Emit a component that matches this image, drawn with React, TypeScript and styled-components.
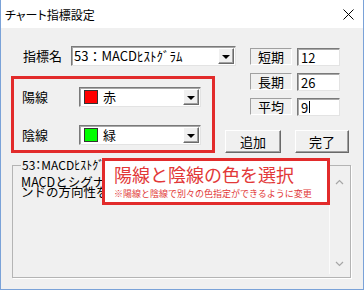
import React from "react";
import styled, { createGlobalStyle, css } from "styled-components";

const Global = createGlobalStyle`
  html, body { margin: 0; padding: 0; background: #ffffff; }
  * { box-sizing: border-box; }
`;

const RED = "#e22b2b";

const Win = styled.div`
  position: relative;
  width: 364px;
  height: 290px;
  border: 1px solid #7aa2d8;
  border-top: none;
  display: flex;
  flex-direction: column;
  font-family: "Noto Sans CJK JP", "Noto Sans", sans-serif;
  color: #000;
`;

const TitleBar = styled.div`
  height: 28px;
  flex: none;
  background: #fff;
  display: flex;
  align-items: center;
  justify-content: space-between;
  padding: 0 9px 0 4px;
  font-size: 12px;
  font-feature-settings: "palt";
`;

const Body = styled.div`
  flex: 1;
  background: #f0f0f0;
  padding: 18px 0 0 10px;
  font-size: 13px;
`;

const Upper = styled.div`
  display: flex;
  align-items: flex-start;
`;

const LeftCol = styled.div`
  width: 204px;
  flex: none;
`;

const Row = styled.div<{ $label: number; $pad: number }>`
  display: flex;
  align-items: center;
  height: 20px;
  & > span:first-child {
    width: ${(p) => p.$label}px;
    padding-left: ${(p) => p.$pad}px;
    flex: none;
    line-height: 20px;
  }
`;

const sunken = css`
  border: 1px solid;
  border-color: #7a7a7a #e3e3e3 #e3e3e3 #7a7a7a;
  box-shadow: inset 1px 1px 0 #a8a8a8;
`;

const Combo = styled.div<{ $w: number }>`
  ${sunken};
  width: ${(p) => p.$w}px;
  height: 20px;
  flex: none;
  background: #fff;
  display: flex;
  align-items: center;
  padding: 0 1px 0 2px;
  font-size: 13px;
  white-space: nowrap;
`;

const ComboText = styled.span`
  flex: 1;
  display: flex;
  align-items: center;
  gap: 5px;
  line-height: 18px;
`;

const DropBtn = styled.span`
  flex: none;
  width: 16px;
  height: 16px;
  background: #f0f0f0;
  border: 1px solid;
  border-color: #fff #6a6a6a #6a6a6a #fff;
  box-shadow: inset -1px -1px 0 #a0a0a0;
  display: flex;
  align-items: center;
  justify-content: center;
  &::after {
    content: "";
    border-left: 4px solid transparent;
    border-right: 4px solid transparent;
    border-top: 4px solid #000;
    margin-top: 1px;
  }
`;

const Swatch = styled.span<{ $c: string }>`
  width: 14px;
  height: 14px;
  flex: none;
  margin-left: 2px;
  border: 1px solid #333;
  background: ${(p) => p.$c};
`;

const RedFrame = styled.div`
  margin-top: 10px;
  width: 204px;
  height: 77px;
  border: 3px solid ${RED};
  padding: 8px 0 0 8px;
  display: flex;
  flex-direction: column;
  gap: 18px;
`;

const RightCol = styled.div`
  margin-left: 10px;
  padding-top: 2px;
  width: 125px;
  flex: none;
`;

const Params = styled.div`
  padding-left: 25px;
  display: flex;
  flex-direction: column;
  gap: 8px;
`;

const ParamRow = styled.div`
  display: flex;
  gap: 5px;
  height: 17px;
`;

const ParamLabel = styled.div`
  width: 42px;
  border: 1px solid;
  border-color: #a0a0a0 #fff #fff #a0a0a0;
  display: flex;
  align-items: center;
  justify-content: center;
  font-size: 13px;
  line-height: 15px;
`;

const Edit = styled.div`
  ${sunken};
  width: 43px;
  height: 18px;
  background: #fff;
  padding-left: 3px;
  font-size: 13px;
  line-height: 15px;
  display: flex;
  align-items: center;
`;

const Caret = styled.span`
  display: inline-block;
  width: 1px;
  height: 12px;
  background: #000;
  margin-left: 1px;
`;

const Buttons = styled.div`
  margin-top: 15px;
  display: flex;
  gap: 14px;
`;

const Button = styled.button<{ $w: number }>`
  width: ${(p) => p.$w}px;
  height: 23px;
  padding: 0;
  background: #f0f0f0;
  border: 1px solid;
  border-color: #fff #696969 #696969 #fff;
  box-shadow: inset -1px -1px 0 #a0a0a0;
  font-family: inherit;
  font-size: 13px;
  color: #000;
`;

const Group = styled.fieldset`
  margin: 5px 0 0 1px;
  width: 339px;
  height: 120px;
  padding: 0 1px 3px 2px;
  border: 1px solid #b4b4b4;
  box-shadow: 1px 1px 0 #fff;
  min-inline-size: 0;
`;

const Legend = styled.legend`
  margin-left: 6px;
  padding: 0 1px;
  font-size: 12px;
  line-height: 14px;
  font-feature-settings: "palt";
`;

const Memo = styled.div`
  display: flex;
  height: 102px;
`;

const MemoText = styled.div`
  flex: 1;
  padding: 5px 0 0 6px;
  font-size: 12.5px;
  line-height: 10px;
  white-space: nowrap;
  overflow: hidden;
`;

const Scroll = styled.div`
  width: 20px;
  flex: none;
  border-left: 1px solid #fbfbfb;
  display: flex;
  flex-direction: column;
  justify-content: space-between;
  align-items: center;
  padding: 7px 0 7px;
  color: #a6a6a6;
`;

const Callout = styled.div`
  position: absolute;
  left: 101px;
  top: 158px;
  width: 228px;
  height: 47px;
  border: 3px solid ${RED};
  background: #fff;
  padding: 2px 0 0 9px;
  color: #e23838;
  white-space: nowrap;
`;

const CalloutTitle = styled.div`
  font-size: 18px;
  line-height: 22px;
`;

const CalloutNote = styled.div`
  margin-top: 3px;
  font-size: 9px;
  line-height: 11px;
`;

const Chevron = ({ up }: { up?: boolean }) => (
  <svg width="9" height="6" viewBox="0 0 9 6">
    <path
      d={up ? "M1 5 L4.5 1.5 L8 5" : "M1 1 L4.5 4.5 L8 1"}
      fill="none"
      stroke="currentColor"
      strokeWidth="1.2"
    />
  </svg>
);

const CloseIcon = () => (
  <svg width="11" height="11" viewBox="0 0 11 11">
    <path d="M0.5 0.5 L10.5 10.5 M10.5 0.5 L0.5 10.5" stroke="#000" strokeWidth="1" />
  </svg>
);

const params = [
  { label: "短期", value: "12" },
  { label: "長期", value: "26" },
  { label: "平均", value: "9", caret: true },
];

export default function App() {
  return (
    <>
      <Global />
      <Win>
        <TitleBar>
          <span>チャート指標設定</span>
          <CloseIcon />
        </TitleBar>
        <Body>
          <Upper>
            <LeftCol>
              <Row $label={60} $pad={12}>
                <span>指標名</span>
                <Combo $w={165}>
                  <ComboText>53：MACDﾋｽﾄｸﾞﾗﾑ</ComboText>
                  <DropBtn />
                </Combo>
              </Row>
              <RedFrame>
                <Row $label={57} $pad={0}>
                  <span>陽線</span>
                  <Combo $w={122}>
                    <ComboText>
                      <Swatch $c="#ff0000" />赤
                    </ComboText>
                    <DropBtn />
                  </Combo>
                </Row>
                <Row $label={57} $pad={0}>
                  <span>陰線</span>
                  <Combo $w={122}>
                    <ComboText>
                      <Swatch $c="#00ff00" />緑
                    </ComboText>
                    <DropBtn />
                  </Combo>
                </Row>
              </RedFrame>
            </LeftCol>
            <RightCol>
              <Params>
                {params.map((p) => (
                  <ParamRow key={p.label}>
                    <ParamLabel>{p.label}</ParamLabel>
                    <Edit>
                      {p.value}
                      {p.caret && <Caret />}
                    </Edit>
                  </ParamRow>
                ))}
              </Params>
              <Buttons>
                <Button $w={56}>追加</Button>
                <Button $w={54}>完了</Button>
              </Buttons>
            </RightCol>
          </Upper>
          <Group>
            <Legend>53：MACDﾋｽﾄｸﾞﾗﾑ</Legend>
            <Memo>
              <MemoText>
                MACDとシグナルの差をヒストグラムで表示し、トレ
                <br />
                ンドの方向性を判断します。
              </MemoText>
              <Scroll>
                <Chevron up />
                <Chevron />
              </Scroll>
            </Memo>
          </Group>
        </Body>
        <Callout>
          <CalloutTitle>陽線と陰線の色を選択</CalloutTitle>
          <CalloutNote>※陽線と陰線で別々の色指定ができるように変更</CalloutNote>
        </Callout>
      </Win>
    </>
  );
}
